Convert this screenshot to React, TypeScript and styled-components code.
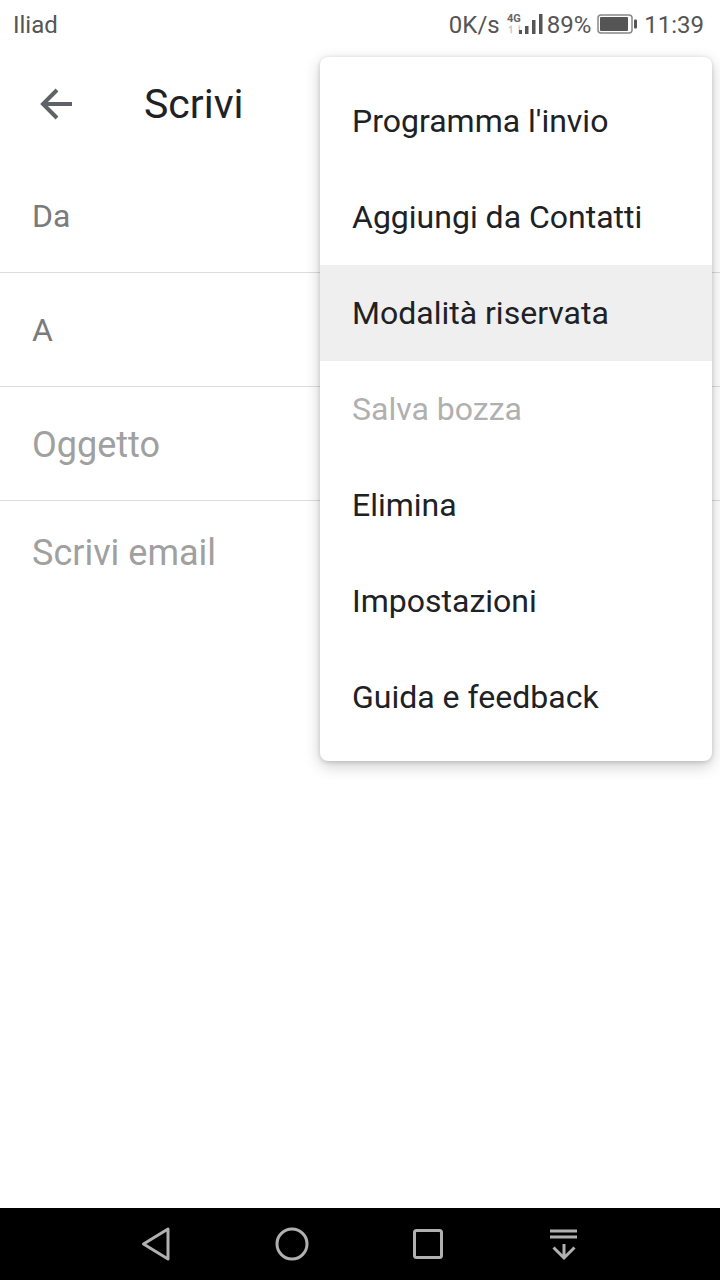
import React from "react";
import styled, { createGlobalStyle } from "styled-components";

const Global = createGlobalStyle`
  html, body { margin: 0; padding: 0; background: #fff; }
  body { font-family: Roboto, "Liberation Sans", sans-serif; }
`;

const Page = styled.div`
  position: relative;
  width: 720px;
  height: 1280px;
  display: flex;
  flex-direction: column;
  overflow: hidden;
  background: #fff;
`;

const StatusBar = styled.div`
  height: 48px;
  flex: none;
  display: flex;
  align-items: center;
  justify-content: space-between;
  padding: 0 16px 0 13px;
  color: #555;
  font-size: 24px;
`;

const StatusRight = styled.div`
  display: flex;
  align-items: center;
`;

const StatusText = styled.span<{ $ml?: number }>`
  margin-left: ${(p) => p.$ml ?? 0}px;
  padding-top: 2px;
  line-height: 46px;
`;

const Toolbar = styled.div`
  height: 112px;
  flex: none;
  display: flex;
  align-items: center;
  padding-left: 36px;
`;

const Title = styled.div`
  margin-left: 68px;
  font-size: 41px;
  color: #202124;
`;

const Field = styled.div<{ $h: number; $line?: boolean; $size: number; $pt?: number; $faint?: boolean }>`
  height: ${(p) => p.$h}px;
  box-sizing: border-box;
  flex: none;
  display: flex;
  align-items: center;
  padding-left: 32px;
  padding-top: ${(p) => p.$pt ?? 0}px;
  font-size: ${(p) => p.$size}px;
  color: ${(p) => (p.$faint ? "#a0a0a0" : "#7b7b7b")};
  border-bottom: ${(p) => (p.$line ? "1px solid #dadce0" : "none")};
`;

const Spacer = styled.div`
  flex: 1;
`;

const NavBar = styled.div`
  height: 72px;
  flex: none;
  background: #000;
  display: flex;
  align-items: center;
  padding-left: 136px;
  gap: 96px;
`;

const Menu = styled.div`
  position: absolute;
  left: 320px;
  top: 57px;
  width: 392px;
  height: 704px;
  box-sizing: border-box;
  padding: 16px 0;
  background: #fff;
  border-radius: 8px;
  box-shadow: 0 5px 16px rgba(0, 0, 0, 0.2), 0 1px 4px rgba(0, 0, 0, 0.16);
`;

const MenuItem = styled.div<{ $active?: boolean; $disabled?: boolean }>`
  height: 96px;
  display: flex;
  align-items: center;
  padding-left: 32px;
  font-size: 32px;
  color: ${(p) => (p.$disabled ? "#b0b0b0" : "#202124")};
  background: ${(p) => (p.$active ? "#efefef" : "transparent")};
`;

const Icon = styled.svg<{ $ml?: number }>`
  display: block;
  flex: none;
  margin-left: ${(p) => p.$ml ?? 0}px;
`;

const items = [
  { label: "Programma l'invio" },
  { label: "Aggiungi da Contatti" },
  { label: "Modalità riservata", active: true },
  { label: "Salva bozza", disabled: true },
  { label: "Elimina" },
  { label: "Impostazioni" },
  { label: "Guida e feedback" },
];

export default function App() {
  return (
    <Page>
      <Global />
      <StatusBar>
        <StatusText>Iliad</StatusText>
        <StatusRight>
          <StatusText>0K/s</StatusText>
          <Icon $ml={6} width="38" height="26" viewBox="0 0 38 26">
            <text x="1" y="11" fontSize="11" fontWeight="700" fontFamily="Roboto" fill="#666">4G</text>
            <text x="1" y="22" fontSize="10" fontWeight="700" fontFamily="Roboto" fill="#c8c8c8">↿⇂</text>
            <rect x="13" y="19" width="3" height="4" fill="#555" />
            <rect x="19" y="15" width="3.5" height="8" fill="#555" />
            <rect x="26" y="9" width="3.5" height="14" fill="#555" />
            <rect x="33" y="3" width="3.5" height="20" fill="#555" />
          </Icon>
          <StatusText $ml={3}>89%</StatusText>
          <Icon $ml={6} width="42" height="20" viewBox="0 0 42 20">
            <rect x="1" y="1" width="34" height="18" rx="3" fill="none" stroke="#888" strokeWidth="1.5" />
            <rect x="3" y="3" width="28" height="14" rx="1" fill="#555" />
            <rect x="37" y="5.5" width="3" height="9" rx="1" fill="#555" />
          </Icon>
          <StatusText $ml={5}>11:39</StatusText>
        </StatusRight>
      </StatusBar>
      <Toolbar>
        <Icon width="40" height="40" viewBox="0 0 40 40">
          <path d="M36 20H8M21 6 7 20l14 14" fill="none" stroke="#5f6368" strokeWidth="4" />
        </Icon>
        <Title>Scrivi</Title>
      </Toolbar>
      <Field $h={113} $line $size={32}>Da</Field>
      <Field $h={114} $line $size={32}>A</Field>
      <Field $h={114} $line $size={36} $pt={2} $faint>Oggetto</Field>
      <Field $h={104} $size={36} $faint>Scrivi email</Field>
      <Spacer />
      <NavBar>
        <Icon width="40" height="40" viewBox="0 0 40 40">
          <path d="M32 5V35L7.5 20Z" fill="none" stroke="#b0b0b0" strokeWidth="3" strokeLinejoin="round" />
        </Icon>
        <Icon width="40" height="40" viewBox="0 0 40 40">
          <circle cx="20" cy="20" r="15" fill="none" stroke="#b0b0b0" strokeWidth="3" />
        </Icon>
        <Icon width="40" height="40" viewBox="0 0 40 40">
          <rect x="6.5" y="6.5" width="27" height="27" rx="2" fill="none" stroke="#b0b0b0" strokeWidth="3" />
        </Icon>
        <Icon width="40" height="40" viewBox="0 0 40 40">
          <path d="M6 7H33M6 13H33M20 20V33M9.5 23.5 20 34 30.5 23.5" fill="none" stroke="#b0b0b0" strokeWidth="3" />
        </Icon>
      </NavBar>
      <Menu>
        {items.map((it) => (
          <MenuItem key={it.label} $active={it.active} $disabled={it.disabled}>
            {it.label}
          </MenuItem>
        ))}
      </Menu>
    </Page>
  );
}
